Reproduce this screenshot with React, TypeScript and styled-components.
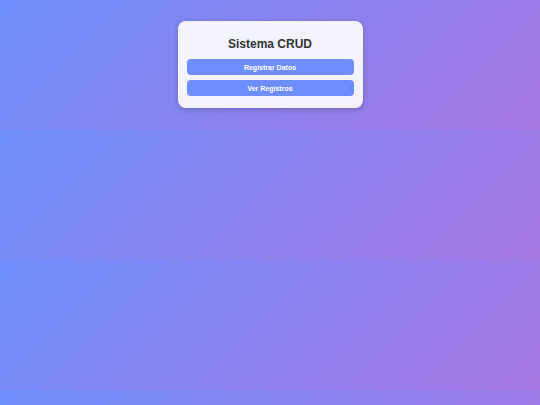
import React from 'react';
import styled, { createGlobalStyle } from 'styled-components';

const GlobalStyle = createGlobalStyle`
  body {
    margin: 0;
    padding: 21px 0 22px;
    font-family: "Liberation Sans", Arial, sans-serif;
    background: linear-gradient(135deg, #6e8efb, #a777e3);
  }
`;

const Container = styled.div`
  display: flex;
  justify-content: center;
`;

const Card = styled.div`
  display: flex;
  flex-direction: column;
  gap: 5px;
  width: 185px;
  box-sizing: border-box;
  padding: 10px 9px 12px;
  background-color: rgba(255, 255, 255, 0.9);
  border-radius: 8px;
  box-shadow: 0 2px 6px rgba(0, 0, 0, 0.2);
`;

const Title = styled.h1`
  margin: 6px 0 3px;
  font-size: 12px;
  line-height: 14px;
  font-weight: bold;
  color: #333;
  text-align: center;
`;

const Button = styled.button`
  height: 16px;
  padding: 0;
  background-color: #6e8efb;
  color: white;
  border: none;
  border-radius: 4px;
  font-family: "Liberation Sans", Arial, sans-serif;
  font-size: 7px;
  font-weight: bold;
  cursor: pointer;

  &:hover {
    background-color: #5a7cf0;
  }
`;

const App = () => {
  return (
    <>
      <GlobalStyle />
      <Container>
        <Card>
          <Title>Sistema CRUD</Title>
          <Button>Registrar Datos</Button>
          <Button>Ver Registros</Button>
        </Card>
      </Container>
    </>
  );
};

export default App;
